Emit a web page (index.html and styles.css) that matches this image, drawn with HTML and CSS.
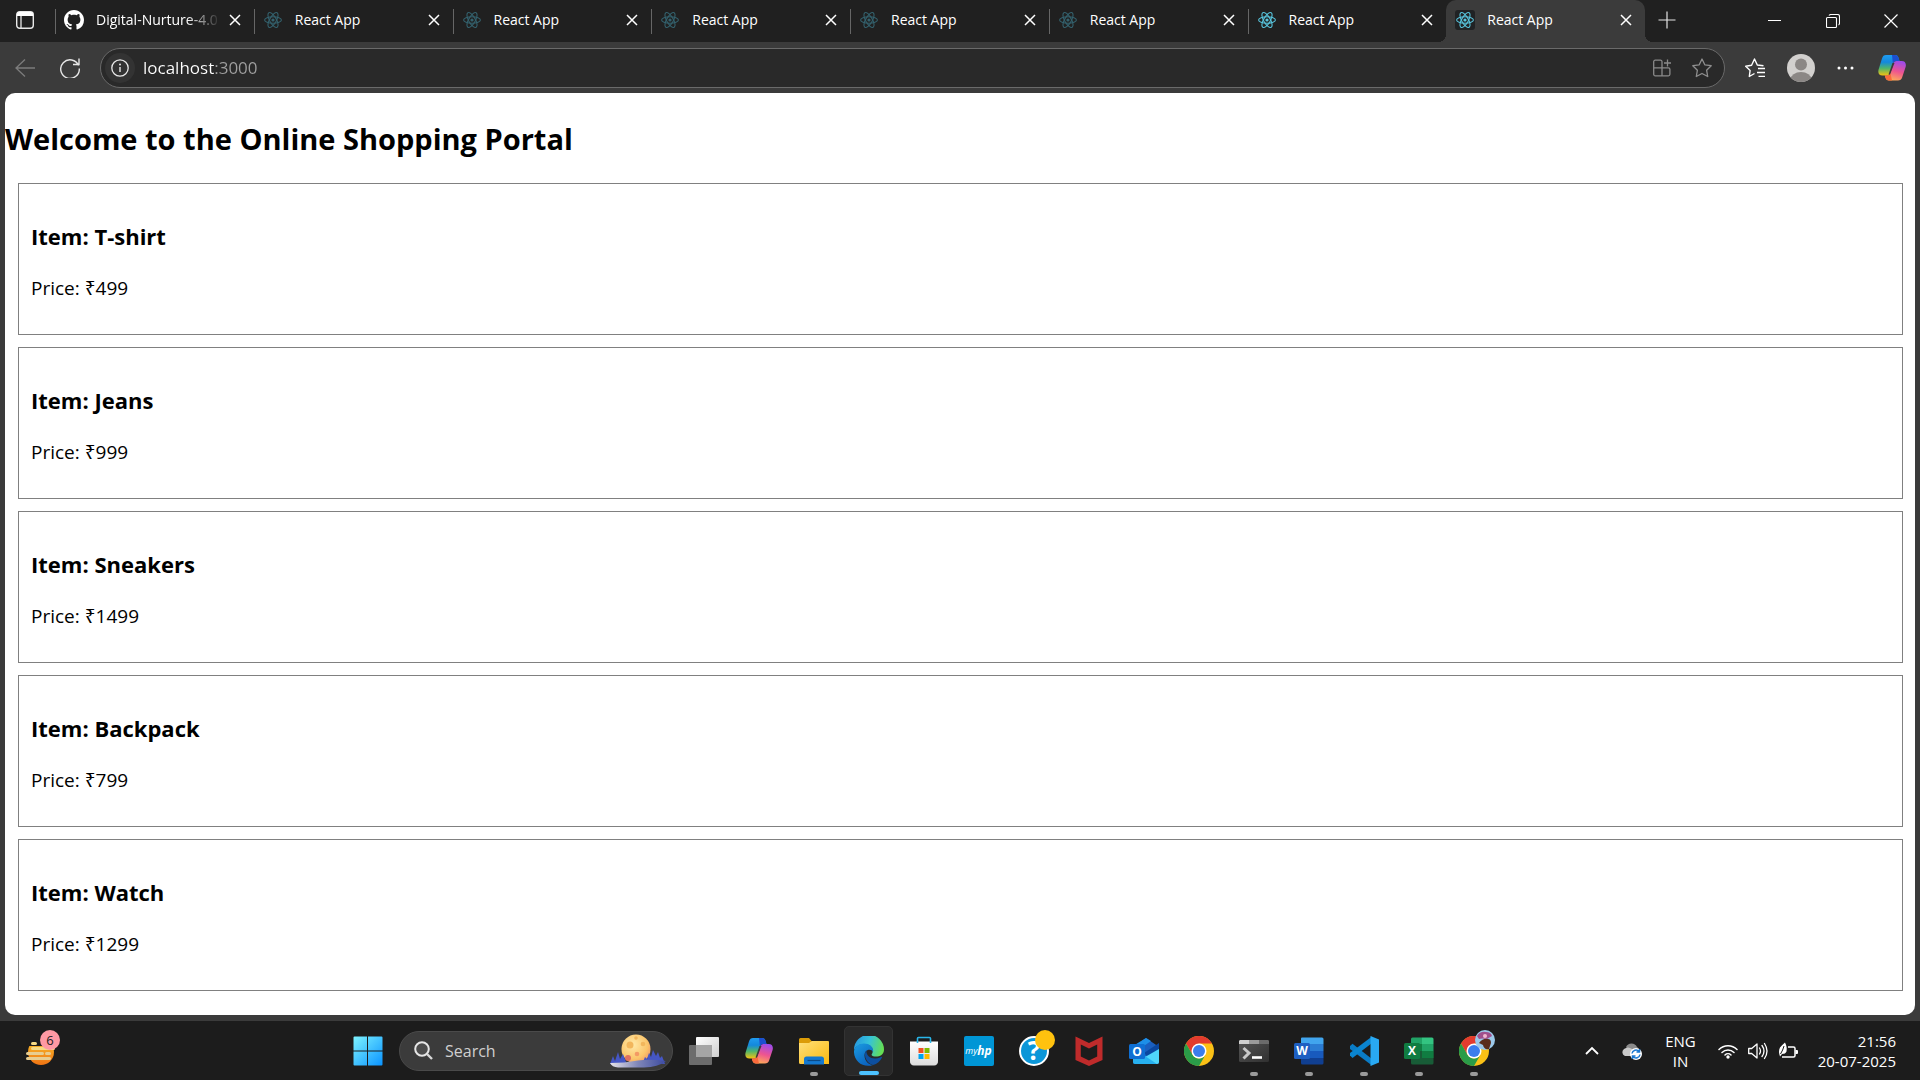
FILE: index.html
```html
<!DOCTYPE html>
<html lang="en">
<head>
<meta charset="utf-8">
<title>React App</title>
<link rel="stylesheet" href="styles.css">
</head>
<body>
<svg class="sprite" width="0" height="0" aria-hidden="true">
  <defs>
    <linearGradient id="cpA" x1="0" y1="0" x2="0" y2="1"><stop offset="0" stop-color="#1f9cf0"/><stop offset=".35" stop-color="#1488dc"/><stop offset=".65" stop-color="#4fb56a"/><stop offset="1" stop-color="#f5c211"/></linearGradient>
    <linearGradient id="cpB" x1="0.6" y1="0" x2="0.3" y2="1"><stop offset="0" stop-color="#a04be8"/><stop offset=".5" stop-color="#ee5490"/><stop offset="1" stop-color="#ffb055"/></linearGradient>
    <linearGradient id="win" x1="0" y1="0" x2="1" y2="1"><stop offset="0" stop-color="#7df3ff"/><stop offset="1" stop-color="#0a93ff"/></linearGradient>
    <linearGradient id="fold" x1="0" y1="0" x2="1" y2="1"><stop offset="0" stop-color="#ffe07a"/><stop offset="1" stop-color="#fbb90f"/></linearGradient>
    <linearGradient id="edA" x1="0" y1="0.3" x2="1" y2="0.5"><stop offset="0" stop-color="#2597e0"/><stop offset=".5" stop-color="#36c3d8"/><stop offset="1" stop-color="#66df50"/></linearGradient>
    <linearGradient id="edB" x1="0" y1="0" x2="0.6" y2="1"><stop offset="0" stop-color="#1b9de2"/><stop offset="1" stop-color="#0b62bd"/></linearGradient>
    <linearGradient id="bag" x1="0" y1="0" x2="0" y2="1"><stop offset="0" stop-color="#ffffff"/><stop offset="1" stop-color="#dcdcdc"/></linearGradient>
    <linearGradient id="term" x1="0" y1="0" x2="1" y2="1"><stop offset="0" stop-color="#565656"/><stop offset="1" stop-color="#303030"/></linearGradient>
    <linearGradient id="task" x1="0" y1="0" x2="1" y2="1"><stop offset="0" stop-color="#ffffff"/><stop offset="1" stop-color="#cfcfcf"/></linearGradient>
    <linearGradient id="orange" x1="0" y1="0" x2="0" y2="1"><stop offset="0" stop-color="#f8c22c"/><stop offset="1" stop-color="#f07414"/></linearGradient>
    <linearGradient id="lake" x1="0" y1="0" x2="1" y2="0"><stop offset="0" stop-color="#e8e4e8"/><stop offset=".5" stop-color="#7f86b8"/><stop offset="1" stop-color="#3b4aa0"/></linearGradient>
    <radialGradient id="moon" cx=".4" cy=".35" r=".7"><stop offset="0" stop-color="#ffe9a8"/><stop offset=".7" stop-color="#fbc56a"/><stop offset="1" stop-color="#f09a66"/></radialGradient>
  </defs>
  <symbol id="i-react" viewBox="0 0 20 20">
    <g fill="none" stroke="currentColor" stroke-width="1.1">
      <ellipse cx="10" cy="10" rx="8.4" ry="3.3"/>
      <ellipse cx="10" cy="10" rx="8.4" ry="3.3" transform="rotate(60 10 10)"/>
      <ellipse cx="10" cy="10" rx="8.4" ry="3.3" transform="rotate(120 10 10)"/>
    </g>
    <circle cx="10" cy="10" r="1.6" fill="currentColor"/>
  </symbol>
  <symbol id="i-x" viewBox="0 0 12 12"><path d="M1 1l10 10M11 1L1 11" fill="none" stroke="currentColor" stroke-width="1.5"/></symbol>
  <symbol id="i-copilot" viewBox="0 0 28 28">
    <path d="M8 1h9c2 0 3 1 3.600 3l.9 3h-3c-2 0-3 .8-3.600 2.600l-3 9.600c-.5 1.600-1.500 2.300-3.200 2.300H4.500C1 21.500-.3 19 .6 15.500L4 4.500C4.700 2 6 1 8 1z" fill="url(#cpA)"/>
    <path d="M14 1h3c2 0 3 1 3.600 3l.9 3h-3c-2 0-3 .8-3.600 2.600z" fill="#1c4fd0"/>
    <path d="M20 26.500h-9c-2 0-3-1-3.600-3l-.6-2h2c2 0 3-.8 3.600-2.600l3-9.300C16 8 17 7 18.600 7h5c3.500 0 4.900 2.500 4 6l-3.400 10.300c-.7 2.300-2.200 3.200-4.200 3.200z" fill="url(#cpB)"/>
    <path d="M14 26.500h-3c-2 0-3-1-3.600-3l-.6-2h2c2 0 3-.8 3.600-2.600z" fill="#fa6a3c"/>
    <path d="M14.500 9L10.500 20.500H12L16.500 9z" fill="#3b3b3b"/>
  </symbol>
  <symbol id="i-chrome" viewBox="0 0 30 30">
    <circle cx="15" cy="15" r="15" fill="#fbc116"/>
    <path d="M2 7.500A15 15 0 0 1 28 7.500H15L8.500 18.700z" fill="#e33b2e"/>
    <path d="M2 7.500L8.500 18.800A7.500 7.500 0 0 0 21.500 18.700L15 30A15 15 0 0 1 2 7.500z" fill="#2a9c48"/>
    <circle cx="15" cy="15" r="7.500" fill="#fff"/><circle cx="15" cy="15" r="6" fill="#3b7ded"/>
  </symbol>
</svg>

<div class="window">
  <header class="tabstrip">
    <button class="tab-actions" aria-label="Tab actions">
      <svg width="18" height="18" viewBox="0 0 18 18"><rect x="0.700" y="0.700" width="16.600" height="16.600" rx="3" fill="none" stroke="#e8e8e8" stroke-width="1.400"/><path d="M1 5V3a2 2 0 0 1 2-2h12a2 2 0 0 1 2 2v2z" fill="#fff"/><path d="M5 5v12" stroke="#e8e8e8" stroke-width="1.300"/></svg>
    </button>
    <nav class="tabs" aria-label="Open tabs">
      <div class="tab"><svg class="favicon" viewBox="0 0 16 16"><path fill="#fff" d="M8 0C3.580 0 0 3.580 0 8c0 3.540 2.290 6.530 5.470 7.590.4.070.55-.17.55-.38 0-.19-.01-.82-.01-1.490-2.010.37-2.530-.49-2.690-.94-.09-.23-.48-.94-.82-1.130-.28-.15-.68-.52-.01-.53.63-.01 1.080.58 1.230.82.72 1.210 1.870.87 2.330.66.070-.52.28-.87.51-1.070-1.780-.2-3.640-.89-3.640-3.950 0-.87.31-1.590.82-2.150-.08-.2-.36-1.020.08-2.120 0 0 .67-.21 2.200.82.64-.18 1.320-.27 2-.27s1.360.09 2 .27c1.530-1.040 2.200-.82 2.200-.82.44 1.100.16 1.920.08 2.120.51.56.82 1.270.82 2.150 0 3.070-1.870 3.750-3.650 3.950.29.25.54.73.54 1.480 0 1.070-.01 1.930-.01 2.200 0 .21.15.46.55.38A8.010 8.010 0 0 0 16 8c0-4.420-3.580-8-8-8z"/></svg><a class="title faded" href="#">Digital-Nurture-4.0</a><button class="close" aria-label="Close tab"><svg><use href="#i-x"/></svg></button></div>
      <div class="tab asleep"><svg class="favicon react"><use href="#i-react"/></svg><a class="title" href="#">React App</a><button class="close" aria-label="Close tab"><svg><use href="#i-x"/></svg></button></div>
      <div class="tab asleep"><svg class="favicon react"><use href="#i-react"/></svg><a class="title" href="#">React App</a><button class="close" aria-label="Close tab"><svg><use href="#i-x"/></svg></button></div>
      <div class="tab asleep"><svg class="favicon react"><use href="#i-react"/></svg><a class="title" href="#">React App</a><button class="close" aria-label="Close tab"><svg><use href="#i-x"/></svg></button></div>
      <div class="tab asleep"><svg class="favicon react"><use href="#i-react"/></svg><a class="title" href="#">React App</a><button class="close" aria-label="Close tab"><svg><use href="#i-x"/></svg></button></div>
      <div class="tab asleep"><svg class="favicon react"><use href="#i-react"/></svg><a class="title" href="#">React App</a><button class="close" aria-label="Close tab"><svg><use href="#i-x"/></svg></button></div>
      <div class="tab"><svg class="favicon react"><use href="#i-react"/></svg><a class="title" href="#">React App</a><button class="close" aria-label="Close tab"><svg><use href="#i-x"/></svg></button></div>
      <div class="tab active"><svg class="favicon react"><use href="#i-react"/></svg><a class="title" href="#" aria-current="page">React App</a><button class="close" aria-label="Close tab"><svg><use href="#i-x"/></svg></button></div>
    </nav>
    <div class="window-controls">
      <button class="new-tab" aria-label="New tab"><svg width="18" height="18" viewBox="0 0 18 18"><path d="M9 0.500v17M0.500 9h17" stroke="#e4e4e4" stroke-width="1.200"/></svg></button>
      <button class="control" aria-label="Minimize"><svg width="14" height="14" viewBox="0 0 14 14"><path d="M0 6.500h13" stroke="#fff"/></svg></button>
      <button class="control" aria-label="Restore"><svg width="14" height="14" viewBox="0 0 14 14"><path d="M.5 4.500a1 1 0 0 1 1-1h8a1 1 0 0 1 1 1v8a1 1 0 0 1-1 1h-8a1 1 0 0 1-1-1zM3 1.500Q3.500.5 5 .5h6.500a2 2 0 0 1 2 2V9q0 1.500-1 2" fill="none" stroke="#fff" stroke-width="1.100"/></svg></button>
      <button class="control" aria-label="Close"><svg width="14" height="14" viewBox="0 0 14 14"><path d="M.5.5l13 13M13.500.5l-13 13" stroke="#fff" stroke-width="1.200"/></svg></button>
    </div>
  </header>

  <div class="toolbar">
    <button class="tool" aria-label="Back"><svg width="20" height="18" viewBox="0 0 20 18"><path d="M20 9H1M10 .5L1 9l9 8.500" fill="none" stroke="#7c7c7c" stroke-width="1.300"/></svg></button>
    <button class="tool" aria-label="Refresh"><svg width="20" height="20" viewBox="0 0 20 20"><path d="M18.600 7.500A9.300 9.300 0 1 0 19.300 10.500M19 .5V6.500H13" fill="none" stroke="#e6e6e6" stroke-width="1.400"/></svg></button>
    <div class="address">
      <button class="site-info" aria-label="Site information"><svg width="18" height="18" viewBox="0 0 18 18"><circle cx="9" cy="9" r="8.200" fill="none" stroke="#e8e8e8" stroke-width="1.300"/><path d="M9 8v5" stroke="#e8e8e8" stroke-width="1.400"/><circle cx="9" cy="5.600" r="1" fill="#e8e8e8"/></svg></button>
      <input class="url" type="text" value="localhost:3000" aria-label="Address">
      <button class="inner-tool" aria-label="App available"><svg width="18" height="18" viewBox="0 0 18 18"><path d="M9 8.800V2.700a1.500 1.500 0 0 0-1.500-1.500H2.200A1.500 1.500 0 0 0 .7 2.700v12.600a1.500 1.500 0 0 0 1.500 1.500h13.200a1.500 1.500 0 0 0 1.500-1.500v-5a1.500 1.500 0 0 0-1.500-1.500H.7M9 8.800v8M14.500.5v7M11 4h7" fill="none" stroke="#8a8a8a" stroke-width="1.300"/></svg></button>
      <button class="inner-tool" aria-label="Add to favorites"><svg width="20" height="20" viewBox="0 0 20 20"><path d="M10 1l2.800 5.800 6.400.9-4.600 4.500 1.100 6.300-5.700-3-5.700 3 1.100-6.300L.8 7.700l6.400-.9z" fill="none" stroke="#8f8f8f" stroke-width="1.300" stroke-linejoin="round"/></svg></button>
    </div>
    <div class="tools">
      <button aria-label="Favorites"><svg width="20" height="20" viewBox="0 0 20 20"><path d="M9.500 15.500L4.300 18.500l.8-6L.7 8.200l5.900-.9L9.500 1l2.800 6 6.200.7" fill="none" stroke="#fff" stroke-width="1.400" stroke-linejoin="round"/><path d="M13 10.500h7M12 14.500h8M13.500 18.300H20" stroke="#fff" stroke-width="1.300"/></svg></button>
      <button aria-label="Profile"><svg width="28" height="28" viewBox="0 0 28 28"><clipPath id="pf"><circle cx="14" cy="14" r="14"/></clipPath><g clip-path="url(#pf)"><path d="M0 0h28v28H0z" fill="#d2d0ce"/><circle cx="14" cy="10.500" r="6" fill="#8b8785"/><ellipse cx="14" cy="25.500" rx="10.500" ry="7.500" fill="#8b8785"/></g></svg></button>
      <button aria-label="Settings and more"><svg width="17" height="4" viewBox="0 0 17 4"><g fill="#fff"><circle cx="2" cy="2" r="1.500"/><circle cx="8.500" cy="2" r="1.500"/><circle cx="15" cy="2" r="1.500"/></g></svg></button>
      <button class="copilot" aria-label="Copilot"><svg width="28" height="28"><use href="#i-copilot"/></svg></button>
    </div>
  </div>

  <main class="page">
    <h2>Welcome to the Online Shopping Portal</h2>
    <section class="item"><h3>Item: T-shirt</h3><p>Price: ₹499</p></section>
    <section class="item"><h3>Item: Jeans</h3><p>Price: ₹999</p></section>
    <section class="item"><h3>Item: Sneakers</h3><p>Price: ₹1499</p></section>
    <section class="item"><h3>Item: Backpack</h3><p>Price: ₹799</p></section>
    <section class="item"><h3>Item: Watch</h3><p>Price: ₹1299</p></section>
  </main>
</div>

<footer class="taskbar">
  <div class="widgets">
    <button class="widget" aria-label="Widgets">
      <svg width="30" height="30" viewBox="0 0 30 30"><circle cx="15" cy="16" r="13" fill="url(#orange)"/><path d="M0 0h30v10H0z" fill="#1c1c1c"/><g stroke="#f6da84" stroke-width="3" stroke-linecap="round"><path d="M6.500 7.500h3M6.500 12.500h21"/><path d="M1.500 17.500h15M1.500 22.500h22M20.500 17.500h3" stroke="#e8cd90"/></g></svg>
      <span class="count">6</span>
    </button>
  </div>
  <div class="apps">
    <button class="app" aria-label="Start"><svg width="30" height="30" viewBox="0 0 30 30"><path d="M1.500.5H14v14H.5v-13a1 1 0 0 1 1-1zM15 .5h13.500a1 1 0 0 1 1 1v13H15zM.5 15.500H14v14H1.500a1 1 0 0 1-1-1zM15 15.500h14.500v13a1 1 0 0 1-1 1H15z" fill="url(#win)"/></svg></button>
    <div class="search">
      <svg width="19" height="19" viewBox="0 0 19 19"><circle cx="8" cy="8" r="6.800" fill="#4c4c4c" stroke="#e6e6e6" stroke-width="2"/><path d="M13 13l5 5" stroke="#d8d8d8" stroke-width="2.400"/></svg>
      <input type="text" placeholder="Search" aria-label="Search">
      <svg width="56" height="36" viewBox="0 0 56 36"><circle cx="26" cy="16" r="14.500" fill="url(#moon)"/><g fill="#f2b65c"><circle cx="20" cy="12" r="3.500"/><circle cx="33" cy="11" r="2.300"/><circle cx="26" cy="5" r="1.800"/><circle cx="27" cy="21" r="2.300" fill="#f39a64"/><circle cx="18" cy="25" r="3" fill="#e0705f"/></g><path d="M0 31l3-8 2 5 3-9 2 7 3-5 3 8v4zM33 29l2-5 2 2 2-6 2 4 2-7 3 6 2-4 2 6 2-2 3 8z" fill="#4556c4"/><path d="M0 30Q14 30 28 27.500Q40 26 56 28Q48 34 34 34.500H8Q2 34 0 30z" fill="url(#lake)"/></svg>
    </div>
    <button class="app" aria-label="Task view"><svg width="30" height="28" viewBox="0 0 30 28"><rect x="7" width="23" height="20" rx="1" fill="url(#task)"/><rect y="8" width="23" height="20" rx="1" fill="#6c6c6c"/><path d="M7 8h16v12H7z" fill="#a5a5a5"/></svg></button>
    <button class="app" aria-label="Copilot"><svg width="28" height="28"><use href="#i-copilot"/></svg></button>
    <button class="app open" aria-label="File Explorer"><svg width="30" height="28" viewBox="0 0 30 28"><path d="M0 8V2.500A1.500 1.500 0 0 1 1.500 1H10l3 3.500v4z" fill="#dc9c07"/><path d="M0 6h10l3-2h16a1 1 0 0 1 1 1v22H1.500A1.500 1.500 0 0 1 0 25.500z" fill="url(#fold)"/><path d="M5 27.500V22a2.500 2.500 0 0 1 2.500-2.500h15A2.500 2.500 0 0 1 25 22v5.500z" fill="#1478cf"/><path d="M8.500 23.500h13" stroke="#0b4a86" stroke-width="1.200"/></svg></button>
    <button class="app open current" aria-label="Edge"><svg width="30" height="30" viewBox="0 0 30 30"><path d="M0 14A15 15 0 0 1 30 13.500C30 19 25 21 20.500 20.500C17.500 20.200 17 19 18.200 17.500C20 14 17.500 8 10 8C5 8 1.500 11 0 14z" fill="url(#edA)"/><path d="M0 15C.8 10.500 5 7.500 10 7.500C16 7.500 20 11.500 19 16C17.500 12.500 11 13 10.500 19C10.300 24 14 28.500 19 29C9 32.500-.5 25 0 15z" fill="url(#edB)"/><path d="M12.500 14C9.500 17.500 10.500 26 19 29C23 28 26.500 25 28 21.500C28 20.500 27 20.800 26 21.500C19 24.500 11.500 20.500 12.500 14z" fill="#0d4f9f"/></svg></button>
    <button class="app" aria-label="Microsoft Store"><svg width="30" height="30" viewBox="0 0 30 30"><path d="M1 5.500h28V25a4 4 0 0 1-4 4.500H5A4 4 0 0 1 1 25z" fill="url(#bag)"/><path d="M8.500 7V2.500a1 1 0 0 1 1-1h11a1 1 0 0 1 1 1V7" fill="none" stroke="#29b6ea" stroke-width="1.600"/><path d="M9.500 12h5v5h-5z" fill="#f25022"/><path d="M15.500 12h5v5h-5z" fill="#7fba00"/><path d="M9.500 18h5v5h-5z" fill="#00a4ef"/><path d="M15.500 18h5v5h-5z" fill="#ffb900"/></svg></button>
    <button class="app" aria-label="myHP"><span class="hp"><span>my</span><b>hp</b></span></button>
    <button class="app" aria-label="HP Support"><svg width="42" height="42" viewBox="0 0 42 42"><circle cx="21" cy="21" r="14" fill="#0b96d8" stroke="#fff" stroke-width="2"/><text x="21" y="30" class="question">?</text><circle cx="32" cy="10" r="10" fill="#ffc20e"/></svg></button>
    <button class="app" aria-label="McAfee"><svg width="28" height="30" viewBox="0 0 28 30"><path d="M.5.5L14 7 27.500.5V24L14 30 .5 24zM5.800 8.500v12L14 24.500l8.200-4v-12L14 12.500z" fill="#bf2b2b" fill-rule="evenodd"/></svg></button>
    <button class="app" aria-label="Outlook"><svg width="30" height="28" viewBox="0 0 30 28"><path d="M4 10L17 1l13 9v15a2 2 0 0 1-2 2H6a2 2 0 0 1-2-2z" fill="#1a5fc0"/><path d="M4 9L17 1l5 3L9 13z" fill="#1d8fe8"/><path d="M15 16L30 6v8L19 20z" fill="#0a47a0"/><path d="M30 12v13a2 2 0 0 1-2 2H6L16 20z" fill="#4fd5fa"/><path d="M4 22l12-3 12 8H6a2 2 0 0 1-2-2z" fill="#27b0ef"/><rect y="7" width="16" height="15" rx="1.500" fill="#0f6fd3"/><text x="8" y="19" class="letter">O</text></svg></button>
    <button class="app" aria-label="Chrome"><svg width="30" height="30"><use href="#i-chrome"/></svg></button>
    <button class="app open" aria-label="Terminal"><svg width="30" height="22" viewBox="0 0 30 22"><rect width="30" height="22" rx="1.500" fill="url(#term)"/><path d="M1 0h9v4H0V1z" fill="#d0d0d0"/><path d="M10 0h10v4H10z" fill="#9a9a9a"/><path d="M20 0h9l1 1v3H20z" fill="#6b6b6b"/><path d="M4.500 8l5.500 5-5.500 5.500" fill="none" stroke="#c8c8c8" stroke-width="3"/><path d="M13 17.500h10" stroke="#fff" stroke-width="2.600"/></svg></button>
    <button class="app open" aria-label="Word"><svg width="30" height="28" viewBox="0 0 30 28"><path d="M7 1.500A1 1 0 0 1 8 .5h20a1.500 1.500 0 0 1 1.500 1.500v5H7z" fill="#41a5ee"/><path d="M7 7h22.500v7H7z" fill="#2b7cd3"/><path d="M7 14h22.500v7H7z" fill="#185abd"/><path d="M7 21h22.500v5a1.500 1.500 0 0 1-1.500 1.500H8.500A1.500 1.500 0 0 1 7 26z" fill="#103f91"/><rect y="6" width="16" height="16" rx="1.500" fill="#1e5fc2"/><text x="8" y="18" class="letter">W</text></svg></button>
    <button class="app open" aria-label="Visual Studio Code"><svg width="30" height="30" viewBox="0 0 30 30"><path d="M1 10l2.500-2.300L23 23v6.500L1 13z" fill="#0a7cc6"/><path d="M1 19.500l2.500 2.500L23 7V.5L1 17z" fill="#0a84cf"/><path d="M21.500 0L30 3.500v23L21.500 30z" fill="#29a9f3"/></svg></button>
    <button class="app open" aria-label="Excel"><svg width="30" height="28" viewBox="0 0 30 28"><path d="M7 2A1.500 1.500 0 0 1 8.500.5H18V7H7z" fill="#21a366"/><path d="M18 .5h10A1.500 1.500 0 0 1 29.500 2v5H18z" fill="#33c481"/><path d="M7 7h11v7H7z" fill="#107c41"/><path d="M18 7h11.500v7H18z" fill="#21a366"/><path d="M7 14h22.500v12a1.500 1.500 0 0 1-1.500 1.500H8.500A1.500 1.500 0 0 1 7 26z" fill="#185c37"/><path d="M18 14h11.500v7H18z" fill="#107c41"/><rect y="6" width="16" height="16" rx="1.500" fill="#107c41"/><text x="8" y="18" class="letter">X</text></svg></button>
    <button class="app open" aria-label="Chrome profile"><svg width="42" height="42" viewBox="0 0 42 42"><svg x="6" y="6" width="30" height="30"><use href="#i-chrome"/></svg><g transform="translate(5 0)"><circle cx="27" cy="10" r="10" fill="#9cc9ea"/><path d="M21 13q4-5 9-4 3 0 3 4l-2 6q-5 1-6-4z" fill="#5a2d1c"/><path d="M19 6q3-5 9-4 5 0 6 4l-5 3q-5-1-8 0z" fill="#a0508c"/><circle cx="27" cy="6" r="2" fill="#f0b8d0"/></g></svg></button>
  </div>
  <div class="tray">
    <button aria-label="Show hidden icons"><svg width="14" height="9" viewBox="0 0 14 9"><path d="M1 8l6-6 6 6" fill="none" stroke="#fff" stroke-width="1.800"/></svg></button>
    <button aria-label="OneDrive"><svg width="22" height="20" viewBox="0 0 22 20"><path d="M5 6a6 6 0 0 1 11 0q2 1 2 5l-8 2z" fill="#8a8a8a"/><path d="M4 15a4 4 0 0 1-1-7q4-3 8 0l5 3v4z" fill="#c9c9c9"/><circle cx="15" cy="13" r="6" fill="#fff"/><path d="M11 12.500a4 4 0 0 1 7-2M19 13.500a4 4 0 0 1-7 2M18.500 8v3h-3M11.500 18v-3h3" fill="none" stroke="#1b78d0" stroke-width="1.500"/></svg></button>
    <button class="language">ENG<br>IN</button>
    <button class="status" aria-label="Network, sound and battery">
      <svg width="20" height="16" viewBox="0 0 20 16"><g fill="none" stroke="#fff" stroke-width="1.500" stroke-linecap="round"><path d="M1 6.500a12.700 12.700 0 0 1 18 0M4 9.500a8.500 8.500 0 0 1 12 0M7 12a4.300 4.300 0 0 1 6 0"/></g><circle cx="10" cy="14" r="1.700" fill="#fff"/></svg>
      <svg width="20" height="18" viewBox="0 0 20 18"><g fill="none" stroke="#fff" stroke-width="1.300" stroke-linejoin="round" stroke-linecap="round"><path d="M.7 6.500h3L9 2v14l-5.300-4.500h-3zM11.500 6q2 3 0 6M14 3.500q4 5.500 0 11M16.500 1.500q5 7.500 0 15"/></g></svg>
      <svg width="20" height="18" viewBox="0 0 20 18"><path d="M10 5h5.500A1.500 1.500 0 0 1 17 6.500v7a1.500 1.500 0 0 1-1.500 1.500H4" fill="none" stroke="#fff" stroke-width="1.500"/><path d="M17.500 8H19a1 1 0 0 1 1 1v2a1 1 0 0 1-1 1h-1.500z" fill="#fff"/><path d="M7 .5q2.500 5 1.500 9Q7.500 12 4 12L2 14.500Q0 9 2 5.500 4 3 7 .5z" fill="#fff"/><path d="M6 4Q5 8 2.500 12" stroke="#1c1c1c" fill="none"/></svg>
    </button>
    <button class="clock"><time datetime="2025-07-20T21:56">21:56<br>20-07-2025</time></button>
  </div>
</footer>
</body>
</html>
```
FILE: styles.css
```css
* { box-sizing: border-box; }

body {
  margin: 0;
  min-height: 100vh;
  display: flex;
  flex-direction: column;
  background: #3b3b3b;
  font-family: "Segoe UI", "Open Sans", "Noto Sans", sans-serif;
  color: #fff;
}

button {
  display: flex;
  align-items: center;
  justify-content: center;
  padding: 0;
  border: 0;
  background: none;
  color: inherit;
  font: inherit;
}

input {
  min-width: 0;
  padding: 0;
  border: 0;
  outline: 0;
  background: none;
  font: inherit;
}

svg { display: block; flex: none; }
.sprite { position: absolute; }

.window {
  flex: 1;
  display: flex;
  flex-direction: column;
  padding-bottom: 6px;
}

/* Tab strip */
.tabstrip {
  display: flex;
  height: 42px;
  background: #202020;
}
.tab-actions { width: 55px; padding-right: 5px; padding-bottom: 2px; }
.tabs { flex: 1; display: flex; min-width: 0; }
.tab {
  flex: 1 1 0;
  min-width: 0;
  display: flex;
  align-items: center;
  gap: 12px;
  padding: 0 13px 2px 9px;
  background: linear-gradient(#666, #666) 0 9px / 1px 25px no-repeat;
}
.tab.active {
  position: relative;
  background: #3b3b3b;
  border-radius: 10px 10px 0 0;
}
.tab.active::before,
.tab.active::after {
  content: "";
  position: absolute;
  bottom: 0;
  width: 8px;
  height: 8px;
}
.tab.active::before { right: 100%; background: radial-gradient(circle at 0 0, #202020 8px, #3b3b3b 8px); }
.tab.active::after { left: 100%; background: radial-gradient(circle at 100% 0, #202020 8px, #3b3b3b 8px); }
.favicon { width: 20px; height: 20px; }
.react { color: #58c4dc; }
.asleep .react { color: #34626e; }
.active .react { background: #202224; border-radius: 3px; }
.title {
  flex: 1;
  min-width: 0;
  overflow: hidden;
  white-space: nowrap;
  color: #fff;
  font-size: 14px;
  line-height: 20px;
  text-decoration: none;
}
.faded { mask-image: linear-gradient(to right, #000 90px, transparent 125px); }
.close svg { width: 12px; height: 12px; }
.window-controls { display: flex; width: 275px; }
.new-tab { width: 44px; margin-right: auto; padding-bottom: 2px; }
.control { width: 58px; }

/* Toolbar */
.toolbar {
  display: flex;
  align-items: center;
  height: 51px;
  padding: 0 14px 0 2px;
}
.tool { width: 45px; height: 40px; }
.address {
  flex: 1;
  display: flex;
  align-items: center;
  height: 40px;
  margin-left: 8px;
  padding: 0 2px 0 4px;
  border: 1px solid #6a6a6a;
  border-radius: 20px;
  background: #292929;
}
.site-info {
  width: 30px;
  height: 30px;
  border-radius: 50%;
  background: #333;
}
.url {
  flex: 1;
  margin-left: 8px;
  font-size: 17px;
  line-height: 24px;
  color: transparent;
  background: linear-gradient(to right, #fff 72px, #a0a0a0 72px);
  background-clip: text;
}
.inner-tool { width: 40px; height: 30px; }
.tools {
  display: flex;
  align-items: center;
  gap: 22px;
  margin-left: 20px;
}
.copilot { margin-left: 2px; }

/* Web page */
.page {
  flex: 1;
  margin: 0 5px;
  overflow: hidden;
  border-radius: 10px;
  background: #fff;
  color: #000;
}
.page h2 {
  margin: 26px 0 24px;
  font-size: 29px;
  line-height: 40px;
}
.item {
  margin: 12px 12px 12px 13px;
  padding: 12px;
  border: 1px solid #808080;
}
.item h3 {
  margin: 25px 0 23px;
  font-size: 22px;
  line-height: 31px;
}
.item p {
  margin: 20px 0;
  font-size: 19px;
  line-height: 27px;
}

/* Taskbar */
.taskbar {
  display: flex;
  height: 59px;
  background: #1c1c1c;
}
.widgets { width: 340px; display: flex; align-items: center; padding-left: 26px; }
.widget { position: relative; }
.count {
  position: absolute;
  left: 14px;
  top: -6px;
  width: 20px;
  border-radius: 50%;
  background: #ff99a4;
  color: #202020;
  font-size: 13px;
  line-height: 20px;
}
.apps { display: flex; align-items: center; }
.app {
  position: relative;
  width: 55px;
  height: 50px;
}
.open::after {
  content: "";
  position: absolute;
  bottom: 0;
  width: 8px;
  height: 4px;
  border-radius: 2px;
  background: #9a9a9a;
}
.current { width: 49px; margin: 0 3px; border: 1px solid #333; border-radius: 5px; background: #292929; }
.current::after { width: 20px; background: #4cc2ff; }
.search {
  display: flex;
  align-items: center;
  width: 274px;
  height: 40px;
  margin: 0 3px 0 4px;
  padding: 0 6px 0 14px;
  border: 1px solid #4a4a4a;
  border-radius: 20px;
  background: #3b3b3b;
}
.search input {
  flex: 1;
  margin-left: 12px;
  font-size: 16px;
  line-height: 24px;
  color: #fff;
}
.search input::placeholder { color: #cfcfcf; }
.hp {
  display: flex;
  align-items: center;
  justify-content: center;
  width: 30px;
  height: 30px;
  border-radius: 2px;
  background: #0096d6;
  font-size: 9px;
  font-style: italic;
}
.hp b { font-size: 12px; }
.question { fill: #fff; font-size: 26px; font-weight: 700; text-anchor: middle; }
.letter { fill: #fff; font-size: 12px; font-weight: 700; text-anchor: middle; }
.tray {
  display: flex;
  align-items: center;
  margin-left: auto;
  padding-right: 24px;
  font-size: 15px;
  line-height: 20px;
}
.tray > :nth-child(2) { margin-left: 22px; }
.language { margin-left: 22px; }
.status { gap: 10px; margin-left: 22px; }
.clock { margin-left: 20px; text-align: right; }
```
